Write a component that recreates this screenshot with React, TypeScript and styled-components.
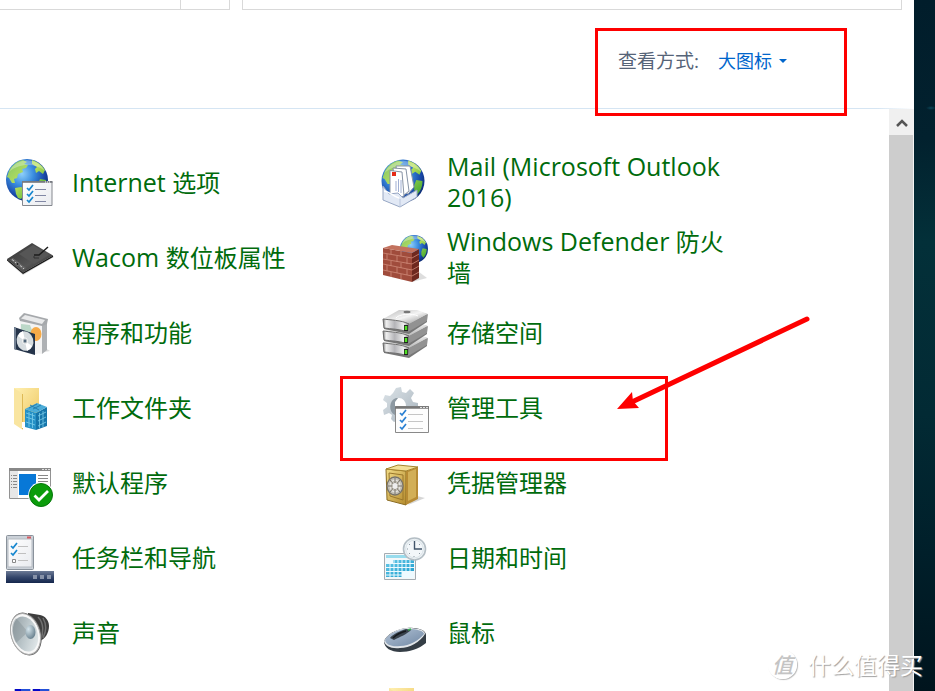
import React from "react";
import styled, { createGlobalStyle } from "styled-components";

const GlobalStyle = createGlobalStyle`
  *, *::before, *::after { box-sizing: border-box; }
  body {
    margin: 0;
    overflow: hidden;
    background: #fff;
    font-family: "Open Sans", "Noto Sans CJK SC", sans-serif;
  }
`;

const Desktop = styled.div`
  position: relative;
  display: flex;
  height: 100vh;
  overflow: hidden;
  background:
    radial-gradient(ellipse 5px 2px at calc(100% - 4px) 108px, #0b4658, transparent),
    linear-gradient(180deg, #011d2b 0, #02212e 20%, #033039 35%, #022a34 60%, #001f2a 80%, #00141d 100%);
`;

const Window = styled.main`
  flex: 1;
  min-width: 0;
  display: flex;
  flex-direction: column;
  margin-right: 21px;
  background: #fff;
`;

const AddressRow = styled.div`
  display: flex;
  gap: 12px;
  height: 10px;
  padding-right: 12px;
`;

const AddressBar = styled.div`
  display: grid;
  grid-template-columns: 1fr 49px;
  width: 230px;
  border: solid #d9d9d9;
  border-width: 0 1px 1px 0;
`;

const RefreshCell = styled.div`
  grid-column: 2;
  border-left: 1px solid #d9d9d9;
`;

const SearchField = styled.div`
  flex: 1;
  border: solid #d9d9d9;
  border-width: 0 1px 1px;
`;

const Header = styled.header`
  display: flex;
  justify-content: flex-end;
  align-items: flex-start;
  height: 98px;
  padding: 18px 67px 0 0;
`;

const Rule = styled.div`
  height: 1px;
  background: linear-gradient(90deg, #d5e5f3 0, #d5e5f3 96%, #fff 100%);
`;

const ViewPicker = styled.div`
  position: relative;
  z-index: 1;
  display: flex;
  align-items: center;
  width: 252px;
  height: 88px;
  padding: 0 0 22px 20px;
  border: 3px solid #fe0000;
`;

const ViewLabel = styled.label`
  width: 100px;
  font-size: 19px;
  line-height: 28px;
  color: #566478;
`;

const ViewSelect = styled.select`
  appearance: none;
  width: 58px;
  padding: 0;
  border: 0;
  background: transparent;
  font-family: inherit;
  font-size: 18px;
  line-height: 28px;
  color: #0066cc;
`;

const Caret = styled.svg`
  width: 8px;
  height: 4px;
  margin-left: 3px;
  fill: #0066cc;
`;

const Body = styled.div`
  flex: 1;
  min-height: 0;
  display: flex;
`;

const ItemGrid = styled.div`
  flex: 1;
  display: grid;
  grid-template-columns: 375px 375px;
  grid-auto-rows: 75px;
  align-content: start;
  padding: 36px 0 0 6px;
`;

const ItemCell = styled.div`
  position: relative;
`;

const ItemLink = styled.a`
  display: flex;
  align-items: center;
  gap: 18px;
  width: 350px;
  height: 75px;
  font-size: 24px;
  line-height: 31px;
  color: #006b0c;
  text-decoration: none;
  &:hover { text-decoration: underline; }
`;

const ItemText = styled.span`
  padding-bottom: 1px;
`;

const Latin = styled.span`
  font-size: 25px;
`;

const NextLine = styled.span`
  display: block;
`;

const Icon = styled.svg`
  flex: none;
  width: 48px;
  height: 48px;
  overflow: visible;
`;

const Highlight = styled.div`
  position: absolute;
  left: -41px;
  top: 6px;
  width: 328px;
  height: 85px;
  border: 3px solid #fe0000;
  pointer-events: none;
`;

const Arrow = styled.svg`
  position: absolute;
  left: 235px;
  top: -55px;
  width: 196px;
  height: 100px;
  pointer-events: none;
`;

const ScrollBar = styled.div`
  width: 25px;
  border-right: 1px solid #f4f4f4;
  display: flex;
  flex-direction: column;
`;

const ScrollButton = styled.button`
  display: flex;
  align-items: center;
  justify-content: center;
  height: 26px;
  padding: 2px 0 0 1px;
  border: 0;
  background: #f0f0f0;
`;

const ScrollThumb = styled.div`
  flex: 1;
  background: #cdcdcd;
`;

const Watermark = styled.div`
  position: absolute;
  right: 12px;
  bottom: 11px;
  display: flex;
  align-items: center;
  gap: 11px;
  color: #fff;
  font-family: "Noto Sans CJK SC", sans-serif;
  font-size: 23px;
  line-height: 32px;
  text-shadow: 1px 1px 1px #a0a0a0;
`;

const Seal = styled.span`
  display: flex;
  align-items: center;
  justify-content: center;
  width: 29px;
  height: 29px;
  border-radius: 50%;
  border: 2px solid #fff;
  box-shadow: 1px 1px 1px #bbb;
  color: #c4c4c4;
  font-size: 21px;
  font-weight: 500;
  font-style: italic;
  text-shadow: none;
`;

const Defs = styled.svg`
  position: absolute;
  width: 0;
  height: 0;
`;

const SharedPaint = () => (
  <Defs aria-hidden="true">
    <defs>
      <radialGradient id="sea" cx=".38" cy=".35" r=".68">
        <stop offset="0" stopColor="#8fd0fa" />
        <stop offset=".4" stopColor="#3b8ee0" />
        <stop offset=".8" stopColor="#1746a6" />
        <stop offset="1" stopColor="#0d2d77" />
      </radialGradient>
      <linearGradient id="land" x2="1" y2="1">
        <stop offset="0" stopColor="#7fc46a" />
        <stop offset=".45" stopColor="#b9e05c" />
        <stop offset="1" stopColor="#289a25" />
      </linearGradient>
      <linearGradient id="metal" x2="1">
        <stop offset="0" stopColor="#777" />
        <stop offset=".12" stopColor="#f0f0f0" />
        <stop offset=".45" stopColor="#b4b4b8" />
        <stop offset=".8" stopColor="#eeeeee" />
        <stop offset="1" stopColor="#888" />
      </linearGradient>
      <linearGradient id="lid" x2="1" y2="1">
        <stop offset="0" stopColor="#b7b7b7" />
        <stop offset=".5" stopColor="#f4f4f4" />
        <stop offset="1" stopColor="#8b8b8b" />
      </linearGradient>
      <linearGradient id="folder" x2="1" y2="1">
        <stop offset="0" stopColor="#fff0b2" />
        <stop offset="1" stopColor="#eec75f" />
      </linearGradient>
      <linearGradient id="brass" x2="1" y2="1">
        <stop offset="0" stopColor="#f2dc86" />
        <stop offset="1" stopColor="#b58b2d" />
      </linearGradient>
      <linearGradient id="slate" x2="1" y2="1">
        <stop offset="0" stopColor="#333" />
        <stop offset=".6" stopColor="#555" />
        <stop offset="1" stopColor="#222" />
      </linearGradient>
      <linearGradient id="paper" x2="1" y2="1">
        <stop offset="0" stopColor="#fff" />
        <stop offset="1" stopColor="#e9ebef" />
      </linearGradient>
      <linearGradient id="bar" y2="1" x2="0">
        <stop offset="0" stopColor="#6c7a95" />
        <stop offset=".5" stopColor="#36486c" />
        <stop offset="1" stopColor="#14264c" />
      </linearGradient>
      <linearGradient id="cone" x2="1" y2="1">
        <stop offset="0" stopColor="#8d989d" />
        <stop offset=".5" stopColor="#bcc7cb" />
        <stop offset="1" stopColor="#edf2f3" />
      </linearGradient>
      <radialGradient id="dome" cx=".3" cy=".3" r=".8">
        <stop offset="0" stopColor="#d6e5ec" />
        <stop offset="1" stopColor="#647c8a" />
      </radialGradient>
      <linearGradient id="gear" x2="1" y2="1">
        <stop offset="0" stopColor="#dce3e8" />
        <stop offset="1" stopColor="#a8b4bd" />
      </linearGradient>
      <linearGradient id="shell" x2="1" y2="1">
        <stop offset="0" stopColor="#b3c3d6" />
        <stop offset="1" stopColor="#7088a4" />
      </linearGradient>
      <linearGradient id="cal" x2="1" y2="1">
        <stop offset="0" stopColor="#65c8e8" />
        <stop offset="1" stopColor="#1a9bcb" />
      </linearGradient>
    </defs>
  </Defs>
);

const Globe = ({ cx, cy, r }: { cx: number; cy: number; r: number }) => (
  <g transform={`translate(${cx} ${cy}) scale(${r / 21})`}>
    <circle r="21" fill="url(#sea)" />
    <path
      fill="url(#land)"
      d="M-18-9C-15-15-10-19-4-20L0-18-3-16 1-15-1-12-5-11-4-8-9-6-10-2-13-1-12 3-15 3-18-2-20-3ZM5-20C11-18 15-15 18-10L16-6 12-9 9-7 8-11 10-13 5-16ZM-12 8-6 7-1 10-2 14-6 19-9 18-11 14ZM13-1 19 0C19 6 17 10 14 13L11 9 11 4Z"
    />
    <path d="M-18-8C-8-17 8-17 18-9A20 20 0 0 0-18-8Z" fill="#fff" opacity=".3" />
  </g>
);

const Ticks = ({ x, ys, color = "#1687cf" }: { x: number; ys: number[]; color?: string }) => (
  <>
    {ys.map((y) => (
      <path key={y} d={`M${x} ${y}l2 2 4-5`} fill="none" stroke={color} strokeWidth="1.7" />
    ))}
  </>
);

const InternetIcon = () => (
  <>
    <Globe cx={21} cy={21} r={21} />
    <path d="M16.500 22.500h29.500v24H16.500z" fill="url(#paper)" stroke="#85888f" />
    <path d="M16 23h30.500" stroke="#74777d" strokeWidth="1.600" />
    <path d="M39 23h1m1 0h1m1 0h1" stroke="#fff" />
    <Ticks x={21} ys={[29, 35, 41]} />
    <path d="M29 30.500h11M29 36.500h11M29 42.500h11" stroke="#8188a5" />
  </>
);

const TabletIcon = () => (
  <>
    <path d="M2 28 17 41 48 23 46 21Z" fill="#aaa" opacity=".5" />
    <path d="M1 25 26 9 47 21.500 17 38.500Z" fill="url(#slate)" />
    <path d="M1 25 17 38.500 47 21.500v1.500L17 40 1 26.500Z" fill="#171717" />
    <path d="M13 20 27 11l16 10-15 9Z" fill="#565656" />
    <path d="M4 25.500 7 24l13 10-3 2Z" fill="#666" />
    <path d="M6 25.500l2 1.500M9 28l1 1M14 31.500l2 1.500M17 34l1 1" stroke="#c4c4c4" />
    <circle cx="11.500" cy="30" r="1.500" fill="#222" stroke="#999" strokeWidth=".6" />
    <path d="M28 21h5L42 13" fill="none" stroke="#1c1c1c" strokeWidth="1.500" />
    <path d="M28 22v2h5" fill="none" stroke="#313131" />
  </>
);

const ProgramsIcon = () => (
  <>
    <path d="M27 45 44 42l-5-3Z" fill="#bbb" opacity=".5" />
    <path d="M14 12 36 16v29L14 41Z" fill="#f3f3f3" />
    <path d="M36 16 41 12v29l-5 4Z" fill="#aeb1b4" />
    <path d="M13 9 18 4 42 10 41 15 36 17 14 12Z" fill="#a6a9ac" />
    <path d="M15 9.500 19 6l20 5-3 4Z" fill="#e9eaeb" />
    <path d="M15 15 24 16l5 13-14-2Z" fill="#bcd8c8" />
    <ellipse cx="30" cy="25" rx="5.500" ry="7" fill="#f6aa48" />
    <path d="M8 18 29 25v21L8 40Z" fill="#25344a" />
    <path d="M8 18 10 19v22l-2-1Z" fill="#728092" />
    <ellipse cx="19" cy="32" rx="8.300" ry="9.800" fill="#d7dde0" transform="rotate(-15 19 32)" />
    <path d="M19 32 12 27a8 9 0 0 1 5-5ZM19 32l7 5a8 9 0 0 1-5 5Z" fill="#fff" />
    <ellipse cx="19" cy="32" rx="2.500" ry="3" fill="#9eaab1" stroke="#f8f8f8" />
    <circle cx="19" cy="32" r="1" fill="#39506a" />
  </>
);

const FolderBase = () => (
  <>
    <path d="M8 4h25v36H16Z" fill="url(#folder)" />
    <path d="M8 4 17 10v36l-9-6Z" fill="#f9e5a0" />
    <path d="M16.500 10v35" stroke="#deb955" />
  </>
);

const WorkFolderIcon = () => (
  <>
    <FolderBase />
    <path d="M16 38h4v6h-4Z" fill="#fff" />
    <path d="M19 25 30 29v17l-11-3Z" fill="#2691c6" />
    <path d="M30 29 41 23v19l-11 4Z" fill="#1675aa" />
    <path d="M19 25 31 19l10 4-11 6Z" fill="#4bacd8" />
    <path d="M20 29l9 3M20 33l9 3M20 38l9 3M23 28v15M26.500 29v15M32 32l8-4M32 37l8-4M32 42l8-4M33.500 29v15M37 27v16" fill="none" stroke="#7ccdea" opacity=".8" />
    <path d="M23 24l8-4m-4 5 8-4M24 21l9 5" stroke="#257fae" />
  </>
);

const DefaultsIcon = () => (
  <>
    <path d="M3.500 10.500h41v29h-41Z" fill="#fff" stroke="#929292" />
    <path d="M3 9h42v3H3Z" fill="#888" />
    <path d="M36 10.500h2m1 0h2m1 0h2" stroke="#ddd" />
    <path d="M4 12h8v27H4Z" fill="#e7e7e7" />
    <path d="M5 16.500h1m1 0h4M5 19.500h1m1 0h4M5 22.500h1m1 0h4M5 25.500h1m1 0h4M5 28.500h1m1 0h4M32 16.500h10M32 19.500h10M32 22.500h10M32 25.500h10" stroke="#888" />
    <path d="M13 15h17v21H13Z" fill="#0878d7" />
    <circle cx="35" cy="36" r="12.800" fill="#fff" />
    <circle cx="35" cy="36" r="11.500" fill="#0b9c0b" stroke="#06770a" />
    <path d="M28.500 36.500 33 41l9-9" fill="none" stroke="#fff" strokeWidth="2.800" />
  </>
);

const TaskbarIcon = () => (
  <>
    <rect x=".5" y="1.500" width="27" height="34" rx="1" fill="#cbd1d8" stroke="#8a929b" />
    <path d="M2 5h24v28H2Z" fill="url(#paper)" stroke="#b4bac1" />
    <path d="M21 3.500h4" stroke="#d55c62" strokeWidth="2" />
    <Ticks x={5} ys={[12, 19]} />
    <path d="M12 12.500h10M12 19.500h8M12 26.500h10" stroke="#c0c0c0" />
    <path d="M6.500 25.500h3v3h-3Z" fill="#fff" stroke="#888" />
    <path d="M0 37h48v12H0Z" fill="url(#bar)" />
    <path d="M27 41h4v4h-4ZM34 41h4v4h-4ZM41 41h4v4h-4Z" fill="#8792a8" />
  </>
);

const SoundIcon = () => (
  <>
    <path d="M22 4 34 6c5 1 9 5 9 11 0 7-4 13-9 15L24 44Z" fill="#3d3d3d" />
    <path d="M32 8c6 6 6 16 2 24M37 9c4 7 3 14 0 20" fill="none" stroke="#707070" strokeWidth="1.500" />
    <ellipse cx="20" cy="25" rx="15" ry="22" transform="rotate(-17 20 25)" fill="#5e5e5e" />
    <ellipse cx="19.500" cy="25" rx="14.300" ry="21" transform="rotate(-17 19.500 25)" fill="#f8f8f8" stroke="#aaa" />
    <ellipse cx="19.500" cy="25" rx="12" ry="18" transform="rotate(-17 19.500 25)" fill="url(#cone)" />
    <path d="M22 23 10 34C5 26 4 15 10 9Z" fill="#7f8b91" opacity=".4" />
    <ellipse cx="24.500" cy="23" rx="5" ry="7" fill="url(#dome)" />
  </>
);

const ScreensIcon = () => (
  <>
    <path d="M8 5h17v12H8ZM26 5h18v12H26Z" fill="#b7c0d1" />
    <path d="M9 5h6v11H9ZM27 5h7v11h-7Z" fill="#0508c8" />
    <path d="M15 5h9v11h-9ZM34 5h9v11h-9Z" fill="#2450d8" />
  </>
);

const MailIcon = () => (
  <>
    <Globe cx={22} cy={22} r={21.500} />
    <path d="M15 7 29 7l4 21-6 7-8-2Z" fill="#fff" stroke="#8793a5" />
    <path d="M12 9 25 10l3 22-6 5-7-4Z" fill="#fff" stroke="#8793a5" />
    <path d="M9 11.500 21 13l2 24-5 2L9 36Z" fill="#fff" stroke="#8793a5" />
    <path d="M11 13h4v4h-4Z" fill="#e52b18" />
    <path d="M15 22v10m2.500-12v13m2.500-12v13" stroke="#a0afd3" />
    <path d="M2 27 8 35l9-1 5 5 14-8v7L19 48 2 41Z" fill="#e2e9f5" stroke="#97a7c4" />
    <path d="M19 40v8" stroke="#bac6dd" />
    <path d="M3 32c7 1 8 5 15 7" stroke="#fff" strokeWidth="1.500" fill="none" />
  </>
);

const FirewallIcon = () => (
  <>
    <Globe cx={33} cy={15} r={14} />
    <path d="M31 48 46 44l-8-6Z" fill="#bbb" opacity=".5" />
    <path d="M2 14 31 19v29L2 41Z" fill="#a04c3c" />
    <path d="M31 19 38 15v29l-7 4Z" fill="#6e281f" />
    <path d="M2 14 11 11 38 15l-7 4Z" fill="#c3725e" />
    <path d="M2 19l29 5 7-4M2 25l29 5 7-4M2 30l29 6 7-4M2 36l29 6 7-4M10 15v5M20 17v5M6 20v5M16 22v6M26 24v6M10 27v5M20 29v5M6 31v6M16 33v6M26 35v6M10 38v5M20 40v5" fill="none" stroke="#cf8a79" strokeWidth=".8" />
  </>
);

const Drive = ({ y }: { y: number }) => (
  <g transform={`translate(0 ${y})`}>
    <path d="M2 12 18 2h18l10 3v8L28 25 3 20Z" fill="#777" />
    <path d="M2 10 18 1h18l11 4-18 10Z" fill="url(#lid)" />
    <path d="M2 10c7 1 18 1 26 5l-1 8C19 20 10 20 3 19Z" fill="url(#metal)" stroke="#6e6e6e" />
    <path d="M28 15 47 5l-1 7-19 11Z" fill="#929292" />
    <path d="M25 16v6" stroke="#222" strokeWidth="4" />
    <path d="M25 17v4" stroke="#4fe024" strokeWidth="2.500" />
  </g>
);

const StorageIcon = () => (
  <>
    <Drive y={24} />
    <Drive y={12} />
    <Drive y={0} />
    <ellipse cx="26" cy="3" rx="3.500" ry="1.300" fill="#777" />
    <path d="M15 9c2-4 17-5 22-2" stroke="#fff" fill="none" />
  </>
);

const ToolsIcon = () => (
  <>
    <path
      fill="url(#gear)"
      fillRule="evenodd"
      d="M15 4l5-1 1 5 4 1 4-4 4 4-3 5 2 4 5 1v6l-5 1-2 5-17 7-3-3 1-4-3-2-5 2-1-5 4-3v-4l-4-3 2-5 5 1 3-3ZM18 14a7 8 0 1 0 0 16 7 8 0 0 0 0-16Z"
    />
    <path d="M15 14c-7 2-8 14-1 17V18l3-4Z" fill="#8d99a2" />
    <path d="M14.500 22.500h33v26h-33Z" fill="#fdfdfd" stroke="#898989" />
    <path d="M14 23.500h34" stroke="#777" strokeWidth="2.500" />
    <path d="M39 23.500h2m1 0h2m1 0h2" stroke="#ddd" />
    <Ticks x={19} ys={[29, 36, 43]} color="#287fd2" />
    <path d="M27 30.500h15M27 37.500h15M27 44.500h15" stroke="#c5c5c5" />
  </>
);

const SafeIcon = () => (
  <>
    <path d="M27 46 44 39l-8-2Z" fill="#bbb" opacity=".6" />
    <path d="M5 10 25 12v34L6 41Z" fill="url(#brass)" stroke="#8b6c23" />
    <path d="M25 12 37 8v32l-12 6Z" fill="#b78b34" />
    <path d="M27 13 35 10v28l-8 4Z" fill="#d2af57" />
    <path d="M5 10 17 6l20 2-12 4Z" fill="#f2df98" stroke="#a6852e" />
    <path d="M8 14 22 16v25L9 37Z" fill="none" stroke="#9a772b" />
    <ellipse cx="14" cy="27" rx="8" ry="9" fill="#c4c0b5" stroke="#77736a" strokeWidth="1.300" />
    <ellipse cx="14" cy="27" rx="5" ry="6" fill="none" stroke="#eee" />
    <path d="M14 19v16M7 27h14M9 21l10 12M19 21 9 33" stroke="#77736a" />
    <ellipse cx="14" cy="27" rx="2.500" ry="3" fill="#eee" />
  </>
);

const CalendarIcon = () => (
  <>
    <path d="M3.500 19.500h31v26h-31Z" fill="#f5f7f8" stroke="#a4acb2" />
    <path d="M5 21h28v3H5Z" fill="#98dced" />
    <path d="M5 26h28v17H5Z" fill="url(#cal)" />
    <path d="M9 25v18M13 25v18M17 25v18M21 25v18M25 25v18M29 25v18M5 29.500h28M5 33.500h28M5 37.500h28M5 41h28" stroke="#eefaff" />
    <path d="M5 25h7v4H5ZM21 38h12v6H21Z" fill="#eefaff" />
    <circle cx="33.500" cy="15" r="11" fill="#eef3f6" stroke="#b4bec5" strokeWidth="1.600" />
    <circle cx="33.500" cy="15" r="8.800" fill="#f3f7fa" stroke="#dae3e8" />
    <path d="M33.500 7v8H41" stroke="#42556b" strokeWidth="1.400" fill="none" />
    <path d="M26 15h1m6 7v1m-5-13 1 1m10-1-1 1M28 20l1-1m10 1-1-1" stroke="#8e9aa4" />
  </>
);

const MouseIcon = () => (
  <>
    <path d="M3 32C6 25 16 20 26 19 36 18 45 21 45 26v8c-7 6-17 9-26 9C10 43 3 39 3 32Z" fill="#353e46" />
    <path d="M3 32C7 25 17 19 27 19c10 0 17 2 17 6-5 8-15 14-25 14C10 40 4 37 3 32Z" fill="#e1e5e9" />
    <path d="M4 31C8 24 18 20 27 20c9 0 16 2 16 5-5 6-14 12-24 12C11 38 5 36 4 31Z" fill="url(#shell)" />
    <path d="M9 29c3-4 10-7 16-9l5 1c-4 4-11 7-17 10Z" fill="#38424c" />
    <path d="M12 29c4-4 9-6 13-7" stroke="#15191d" strokeWidth="1.500" fill="none" />
    <path d="M27 21l3-1" stroke="#38b451" strokeWidth="1.500" />
  </>
);

type Item = {
  latin?: string;
  label?: string;
  nextLine?: string;
  icon: React.ReactNode;
  marked?: boolean;
};

const items: Item[] = [
  { latin: "Internet ", label: "选项", icon: <InternetIcon /> },
  { latin: "Mail (Microsoft Outlook 2016)", icon: <MailIcon /> },
  { latin: "Wacom ", label: "数位板属性", icon: <TabletIcon /> },
  { latin: "Windows Defender ", label: "防火", nextLine: "墙", icon: <FirewallIcon /> },
  { label: "程序和功能", icon: <ProgramsIcon /> },
  { label: "存储空间", icon: <StorageIcon /> },
  { label: "工作文件夹", icon: <WorkFolderIcon /> },
  { label: "管理工具", icon: <ToolsIcon />, marked: true },
  { label: "默认程序", icon: <DefaultsIcon /> },
  { label: "凭据管理器", icon: <SafeIcon /> },
  { label: "任务栏和导航", icon: <TaskbarIcon /> },
  { label: "日期和时间", icon: <CalendarIcon /> },
  { label: "声音", icon: <SoundIcon /> },
  { label: "鼠标", icon: <MouseIcon /> },
  { icon: <ScreensIcon /> },
  { icon: <FolderBase /> },
];

export default function App() {
  return (
    <>
      <GlobalStyle />
      <SharedPaint />
      <Desktop>
        <Window>
          <AddressRow>
            <AddressBar>
              <RefreshCell />
            </AddressBar>
            <SearchField />
          </AddressRow>
          <Header>
            <ViewPicker>
              <ViewLabel htmlFor="view">查看方式:</ViewLabel>
              <ViewSelect id="view">
                <option>大图标</option>
              </ViewSelect>
              <Caret viewBox="0 0 8 4" aria-hidden="true">
                <path d="M0 0h8L4 4Z" />
              </Caret>
            </ViewPicker>
          </Header>
          <Rule />
          <Body>
            <ItemGrid>
              {items.map((item, i) => (
                <ItemCell key={i}>
                  <ItemLink href="#">
                    <Icon viewBox="0 0 48 48" aria-hidden="true">
                      {item.icon}
                    </Icon>
                    <ItemText>
                      {item.latin && <Latin>{item.latin}</Latin>}
                      {item.label}
                      {item.nextLine && <NextLine>{item.nextLine}</NextLine>}
                    </ItemText>
                  </ItemLink>
                  {item.marked && (
                    <>
                      <Highlight />
                      <Arrow viewBox="0 0 196 100" aria-hidden="true">
                        <path d="M191 4 18 86" stroke="#fe0000" strokeWidth="5" strokeLinecap="round" />
                        <path d="M1 94 16 77l1 9 6 7Z" fill="#fe0000" />
                      </Arrow>
                    </>
                  )}
                </ItemCell>
              ))}
            </ItemGrid>
            <ScrollBar>
              <ScrollButton type="button" aria-label="向上滚动">
                <svg width="12" height="10" viewBox="0 0 12 10" aria-hidden="true">
                  <path d="M1 8 6 3l5 5" fill="none" stroke="#555" strokeWidth="2.500" />
                </svg>
              </ScrollButton>
              <ScrollThumb />
            </ScrollBar>
          </Body>
        </Window>
        <Watermark>
          <Seal>值</Seal>
          什么值得买
        </Watermark>
      </Desktop>
    </>
  );
}
